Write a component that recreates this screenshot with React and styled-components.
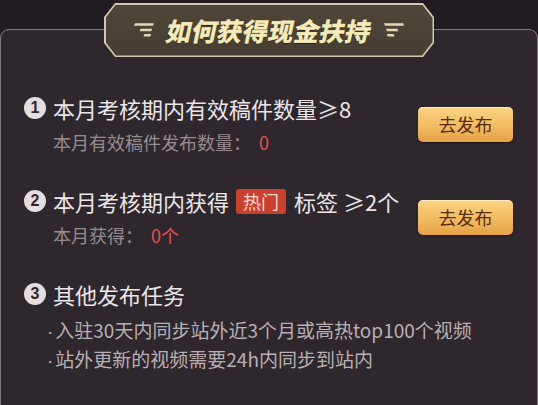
import React from "react";
import styled, { createGlobalStyle } from "styled-components";

const GlobalStyle = createGlobalStyle`
  html, body {
    margin: 0;
    padding: 0;
    background: #231b22;
  }
  body {
    font-family: "Noto Sans CJK SC", "Noto Sans", sans-serif;
  }
`;

const bullets = [
  "入驻30天内同步站外近3个月或高热top100个视频",
  "站外更新的视频需要24h内同步到站内",
];

// 标题两侧的三道横线
const Stripes = ({ flip }) => (
  <StripeSvg viewBox="0 0 22 14" $flip={flip}>
    <polygon points="2,0 22,0 21,2.6 1,2.6" />
    <polygon points="8,5.6 20,5.6 19,8.2 7,8.2" />
    <polygon points="12,11.2 19,11.2 18,13.8 11,13.8" />
  </StripeSvg>
);

const App = () => {
  const tasks = [
    {
      no: 1,
      title: <>本月考核期内有效稿件数量≥8</>,
      subLabel: "本月有效稿件发布数量：",
      subValue: "0",
    },
    {
      no: 2,
      title: (
        <>
          本月考核期内获得<HotTag>热门</HotTag>标签 ≥2个
        </>
      ),
      subLabel: "本月获得：",
      subValue: "0个",
    },
  ];

  return (
    <>
      <GlobalStyle />
      <Page>
        <Card>
          <Badge>
            <BadgeInner>
              <Stripes />
              <BadgeTitle>如何获得现金扶持</BadgeTitle>
              <Stripes flip />
            </BadgeInner>
          </Badge>

          {tasks.map((task) => (
            <TaskRow key={task.no}>
              <TaskInfo>
                <TaskTitle>
                  <Num>{task.no}</Num>
                  <span>{task.title}</span>
                </TaskTitle>
                <SubLine>
                  {task.subLabel}
                  <Red>{task.subValue}</Red>
                </SubLine>
              </TaskInfo>
              <GoButton>去发布</GoButton>
            </TaskRow>
          ))}

          <TaskRow>
            <TaskInfo>
              <TaskTitle>
                <Num>3</Num>
                <span>其他发布任务</span>
              </TaskTitle>
              <BulletList>
                {bullets.map((b) => (
                  <li key={b}>
                    <Dot>·</Dot>
                    {b}
                  </li>
                ))}
              </BulletList>
            </TaskInfo>
          </TaskRow>
        </Card>
      </Page>
    </>
  );
};

const Page = styled.div`
  padding-top: 29px;
  height: 405px;
  box-sizing: border-box;
  overflow: hidden;
`;

const Card = styled.div`
  position: relative;
  min-height: 420px;
  box-sizing: border-box;
  background: #2f272e;
  border: 1px solid #85797d;
  border-radius: 9px;
  padding: 63px 24px 0;
  display: flex;
  flex-direction: column;
  gap: 31px;
`;

const Badge = styled.div`
  position: absolute;
  top: -27px;
  left: 50%;
  transform: translateX(-50%);
  width: 330px;
  height: 54px;
  box-sizing: border-box;
  padding: 1.5px;
  background: #d2c8ad;
  clip-path: polygon(
    11px 0,
    calc(100% - 11px) 0,
    100% 14px,
    100% calc(100% - 14px),
    calc(100% - 11px) 100%,
    11px 100%,
    0 calc(100% - 14px),
    0 14px
  );
`;

const BadgeInner = styled.div`
  width: 100%;
  height: 100%;
  display: flex;
  align-items: center;
  justify-content: center;
  gap: 13px;
  background: linear-gradient(180deg, #4f4639 0%, #463e33 100%);
  clip-path: polygon(
    10.4px 0,
    calc(100% - 10.4px) 0,
    100% 13.4px,
    100% calc(100% - 13.4px),
    calc(100% - 10.4px) 100%,
    10.4px 100%,
    0 calc(100% - 13.4px),
    0 13.4px
  );
`;

const StripeSvg = styled.svg`
  width: 21px;
  height: 14px;
  fill: #e3d8b6;
  transform: ${(props) => (props.$flip ? "scaleX(-1)" : "none")};
`;

const BadgeTitle = styled.span`
  font-size: 25px;
  font-weight: 700;
  letter-spacing: 0.6px;
  color: #f6ecba;
  line-height: 30px;
  transform: skewX(-12deg);
  -webkit-text-stroke: 0.6px #f6ecba;
  text-shadow: 0 1px 1px rgba(0, 0, 0, 0.5);
`;

const TaskRow = styled.div`
  display: flex;
  align-items: center;
  justify-content: space-between;
`;

const TaskInfo = styled.div`
  display: flex;
  flex-direction: column;
`;

const TaskTitle = styled.div`
  display: flex;
  align-items: center;
  gap: 7px;
  height: 30px;
  font-size: 22px;
  color: #ebe5e7;
  white-space: nowrap;
`;

const Num = styled.span`
  width: 22px;
  height: 22px;
  flex: none;
  border-radius: 50%;
  background: #e5dde0;
  color: #2f272e;
  font-family: "Liberation Sans", sans-serif;
  font-size: 16px;
  font-weight: 700;
  line-height: 22px;
  text-align: center;
  margin-left: -1px;
`;

const HotTag = styled.span`
  display: inline-block;
  margin: 0 8px 0 7px;
  padding: 0 7px;
  height: 25px;
  line-height: 25px;
  border-radius: 3px;
  background: #c8412f;
  color: #f8d8ce;
  font-size: 18px;
  vertical-align: 2px;
`;

const SubLine = styled.div`
  margin-top: 6px;
  padding-left: 28px;
  font-size: 18px;
  line-height: 26px;
  color: #968c90;
`;

const Red = styled.span`
  margin-left: 8px;
  color: #e5504b;
`;

const GoButton = styled.button`
  width: 95px;
  height: 35px;
  border: none;
  border-radius: 5px;
  background: linear-gradient(180deg, #fbd484 0%, #f2bb62 55%, #e6a046 100%);
  box-shadow: inset 0 1px 0 rgba(255, 244, 210, 0.7), 0 1px 2px rgba(0, 0, 0, 0.4);
  color: #5a2d11;
  font-family: "Noto Sans CJK SC", sans-serif;
  font-size: 18px;
  padding: 0;
  cursor: pointer;
`;

const BulletList = styled.ul`
  margin: 7px 0 0;
  padding: 0 0 0 22px;
  list-style: none;
  font-size: 19px;
  line-height: 27px;
  color: #b8afb3;

  li {
    white-space: nowrap;
  }
`;

const Dot = styled.span`
  font-family: "Liberation Sans", sans-serif;
  margin-right: 2px;
`;

export default App;
